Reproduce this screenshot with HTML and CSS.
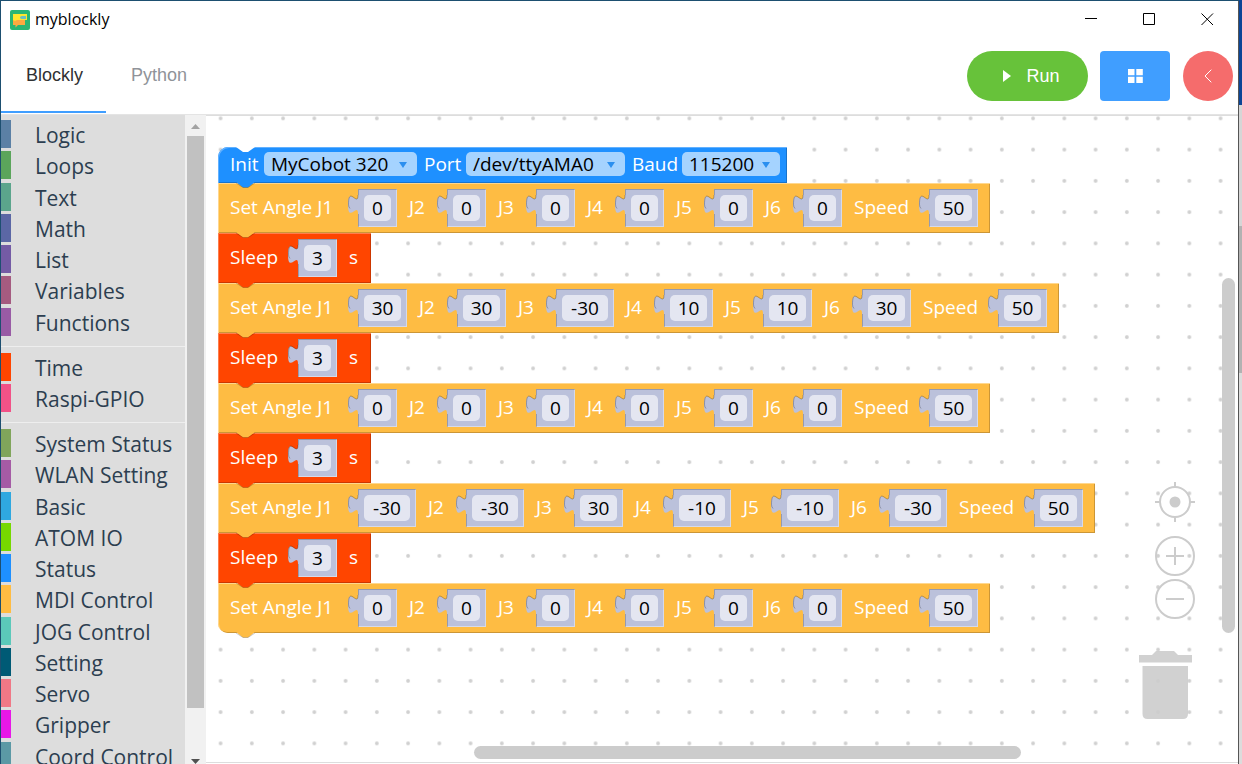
FILE: index.html
```html
<!DOCTYPE html>
<html lang="en">
<head>
<meta charset="utf-8">
<title>myblockly</title>
<link rel="stylesheet" href="styles.css">
</head>
<body>
<svg class="defs" aria-hidden="true">
  <symbol id="tab" viewBox="0 0 11 26"><path class="tab-fill" d="M11 6H10C10 18.500 0 -4 0 15.500S10 12.500 10 25H11Z"/><path class="tab-edge" d="M10 6C10 18.500 .5 -4 .5 15.500Q.5 18 2 19.500"/></symbol>
  <symbol id="bump" viewBox="0 0 20 7"><path d="M0 0 7 5.500H12L19 0Z"/><path class="bump-edge" d="M0 1 7 5.500H12L19 1"/></symbol>
</svg>
<div class="window">
  <header class="titlebar">
    <svg class="logo" viewBox="0 0 20 20" aria-hidden="true"><rect width="20" height="20" rx="2" fill="#2bb673"/><path d="M4 9H15V15H8L5.500 17.500V15H3V10Z" fill="#ffa940"/><path d="M3 4H17V10H7L5 11 3 10Z" fill="#ffe62e"/><path d="M10 7 11.500 6H16V9H11.500L10 8Z" fill="#6cc0c0"/></svg>
    <span class="app-name">myblockly</span>
    <div class="window-buttons">
      <button type="button" aria-label="Minimize"><svg viewBox="0 0 13 13"><path d="M0 5.500H12"/></svg></button>
      <button type="button" aria-label="Maximize"><svg viewBox="0 0 13 13"><path d="M.5 .5H11.500V11.500H.5Z"/></svg></button>
      <button type="button" aria-label="Close"><svg viewBox="0 0 13 13"><path d="M.5 .5 12 12M12 .5 .5 12"/></svg></button>
    </div>
  </header>
  <div class="toolbar">
    <nav class="tabs">
      <a class="tab active" href="#blockly">Blockly</a>
      <a class="tab" href="#python">Python</a>
    </nav>
    <div class="actions">
      <button type="button" class="run"><svg viewBox="0 0 8 12" aria-hidden="true"><path d="M0 0 8 6 0 12Z"/></svg>Run</button>
      <button type="button" class="grid-button" aria-label="Panels"><svg viewBox="0 0 15 14"><path d="M0 0H6.500V6.200H0ZM8.300 0H14.800V6.200H8.300ZM0 7.800H6.500V14H0ZM8.300 7.800H14.800V14H8.300Z"/></svg></button>
      <button type="button" class="collapse" aria-label="Collapse"><svg viewBox="0 0 8 14"><path d="M7.300 .7 1 7 7.300 13.300"/></svg></button>
    </div>
  </div>
  <main class="main">
    <aside class="toolbox">
      <nav class="categories">
        <div class="group logic-group">
          <a class="cat c-logic" href="#logic">Logic</a>
          <a class="cat c-loops" href="#loops">Loops</a>
          <a class="cat c-text" href="#text">Text</a>
          <a class="cat c-math" href="#math">Math</a>
          <a class="cat c-list" href="#list">List</a>
          <a class="cat c-vars" href="#variables">Variables</a>
          <a class="cat c-func" href="#functions">Functions</a>
        </div>
        <div class="group time-group">
          <a class="cat c-time" href="#time">Time</a>
          <a class="cat c-gpio" href="#gpio">Raspi-GPIO</a>
        </div>
        <div class="group robot-group">
          <a class="cat c-system" href="#system">System Status</a>
          <a class="cat c-wlan" href="#wlan">WLAN Setting</a>
          <a class="cat c-basic" href="#basic">Basic</a>
          <a class="cat c-atom" href="#atom">ATOM IO</a>
          <a class="cat c-status" href="#status">Status</a>
          <a class="cat c-mdi" href="#mdi">MDI Control</a>
          <a class="cat c-jog" href="#jog">JOG Control</a>
          <a class="cat c-setting" href="#setting">Setting</a>
          <a class="cat c-servo" href="#servo">Servo</a>
          <a class="cat c-gripper" href="#gripper">Gripper</a>
          <a class="cat c-coord" href="#coord">Coord Control</a>
        </div>
      </nav>
      <div class="scroll-track" aria-hidden="true">
        <svg viewBox="0 0 9 5"><path d="M0 5 4.500 0 9 5Z" fill="#a3a3a3"/></svg>
        <div class="scroll-thumb"></div>
        <svg viewBox="0 0 9 5"><path d="M0 0H9L4.500 5Z" fill="#505050"/></svg>
      </div>
    </aside>
    <section class="workspace" aria-label="Workspace">
      <svg class="dots" aria-hidden="true">
        <pattern id="grid" width="31.250" height="31.250" patternUnits="userSpaceOnUse" x="-1" y="-13.250"><circle cx="15.600" cy="15.600" r="1.900" fill="#d0d0d0"/></pattern>
        <rect width="100%" height="100%" fill="url(#grid)"/>
      </svg>
      <div class="stack">
        <div class="block init">
          <svg class="notch" viewBox="0 0 20 7" aria-hidden="true"><path d="M0 0 7 5H12L19 0Z"/></svg>
          <label class="init-label" for="model">Init</label>
          <span class="picker model"><select id="model"><option>MyCobot 320</option></select><i class="caret"></i></span>
          <label class="port-label" for="port">Port</label>
          <span class="picker port"><select id="port"><option>/dev/ttyAMA0</option></select><i class="caret"></i></span>
          <label class="baud-label" for="baud">Baud</label>
          <span class="picker baud"><select id="baud"><option>115200</option></select><i class="caret"></i></span>
          <svg class="bump"><use href="#bump"/></svg>
        </div>
        <div class="block angle">
          <label class="arg"><span class="name">Set Angle J1</span><span class="socket one"><svg><use href="#tab"/></svg><input value="0"></span></label>
          <label class="arg"><span class="joint">J2</span><span class="socket one"><svg><use href="#tab"/></svg><input value="0"></span></label>
          <label class="arg"><span class="joint">J3</span><span class="socket one"><svg><use href="#tab"/></svg><input value="0"></span></label>
          <label class="arg"><span class="joint">J4</span><span class="socket one"><svg><use href="#tab"/></svg><input value="0"></span></label>
          <label class="arg"><span class="joint">J5</span><span class="socket one"><svg><use href="#tab"/></svg><input value="0"></span></label>
          <label class="arg"><span class="joint">J6</span><span class="socket one"><svg><use href="#tab"/></svg><input value="0"></span></label>
          <label class="arg"><span class="speed">Speed</span><span class="socket two"><svg><use href="#tab"/></svg><input value="50"></span></label>
          <svg class="bump"><use href="#bump"/></svg>
        </div>
        <div class="block sleep">
          <label class="arg"><span class="sleep-name">Sleep</span><span class="socket one"><svg><use href="#tab"/></svg><input value="3"></span><span class="unit">s</span></label>
          <svg class="bump"><use href="#bump"/></svg>
        </div>
        <div class="block angle">
          <label class="arg"><span class="name">Set Angle J1</span><span class="socket two"><svg><use href="#tab"/></svg><input value="30"></span></label>
          <label class="arg"><span class="joint">J2</span><span class="socket two"><svg><use href="#tab"/></svg><input value="30"></span></label>
          <label class="arg"><span class="joint">J3</span><span class="socket three"><svg><use href="#tab"/></svg><input value="-30"></span></label>
          <label class="arg"><span class="joint">J4</span><span class="socket two"><svg><use href="#tab"/></svg><input value="10"></span></label>
          <label class="arg"><span class="joint">J5</span><span class="socket two"><svg><use href="#tab"/></svg><input value="10"></span></label>
          <label class="arg"><span class="joint">J6</span><span class="socket two"><svg><use href="#tab"/></svg><input value="30"></span></label>
          <label class="arg"><span class="speed">Speed</span><span class="socket two"><svg><use href="#tab"/></svg><input value="50"></span></label>
          <svg class="bump"><use href="#bump"/></svg>
        </div>
        <div class="block sleep">
          <label class="arg"><span class="sleep-name">Sleep</span><span class="socket one"><svg><use href="#tab"/></svg><input value="3"></span><span class="unit">s</span></label>
          <svg class="bump"><use href="#bump"/></svg>
        </div>
        <div class="block angle">
          <label class="arg"><span class="name">Set Angle J1</span><span class="socket one"><svg><use href="#tab"/></svg><input value="0"></span></label>
          <label class="arg"><span class="joint">J2</span><span class="socket one"><svg><use href="#tab"/></svg><input value="0"></span></label>
          <label class="arg"><span class="joint">J3</span><span class="socket one"><svg><use href="#tab"/></svg><input value="0"></span></label>
          <label class="arg"><span class="joint">J4</span><span class="socket one"><svg><use href="#tab"/></svg><input value="0"></span></label>
          <label class="arg"><span class="joint">J5</span><span class="socket one"><svg><use href="#tab"/></svg><input value="0"></span></label>
          <label class="arg"><span class="joint">J6</span><span class="socket one"><svg><use href="#tab"/></svg><input value="0"></span></label>
          <label class="arg"><span class="speed">Speed</span><span class="socket two"><svg><use href="#tab"/></svg><input value="50"></span></label>
          <svg class="bump"><use href="#bump"/></svg>
        </div>
        <div class="block sleep">
          <label class="arg"><span class="sleep-name">Sleep</span><span class="socket one"><svg><use href="#tab"/></svg><input value="3"></span><span class="unit">s</span></label>
          <svg class="bump"><use href="#bump"/></svg>
        </div>
        <div class="block angle">
          <label class="arg"><span class="name">Set Angle J1</span><span class="socket three"><svg><use href="#tab"/></svg><input value="-30"></span></label>
          <label class="arg"><span class="joint">J2</span><span class="socket three"><svg><use href="#tab"/></svg><input value="-30"></span></label>
          <label class="arg"><span class="joint">J3</span><span class="socket two"><svg><use href="#tab"/></svg><input value="30"></span></label>
          <label class="arg"><span class="joint">J4</span><span class="socket three"><svg><use href="#tab"/></svg><input value="-10"></span></label>
          <label class="arg"><span class="joint">J5</span><span class="socket three"><svg><use href="#tab"/></svg><input value="-10"></span></label>
          <label class="arg"><span class="joint">J6</span><span class="socket three"><svg><use href="#tab"/></svg><input value="-30"></span></label>
          <label class="arg"><span class="speed">Speed</span><span class="socket two"><svg><use href="#tab"/></svg><input value="50"></span></label>
          <svg class="bump"><use href="#bump"/></svg>
        </div>
        <div class="block sleep">
          <label class="arg"><span class="sleep-name">Sleep</span><span class="socket one"><svg><use href="#tab"/></svg><input value="3"></span><span class="unit">s</span></label>
          <svg class="bump"><use href="#bump"/></svg>
        </div>
        <div class="block angle last">
          <label class="arg"><span class="name">Set Angle J1</span><span class="socket one"><svg><use href="#tab"/></svg><input value="0"></span></label>
          <label class="arg"><span class="joint">J2</span><span class="socket one"><svg><use href="#tab"/></svg><input value="0"></span></label>
          <label class="arg"><span class="joint">J3</span><span class="socket one"><svg><use href="#tab"/></svg><input value="0"></span></label>
          <label class="arg"><span class="joint">J4</span><span class="socket one"><svg><use href="#tab"/></svg><input value="0"></span></label>
          <label class="arg"><span class="joint">J5</span><span class="socket one"><svg><use href="#tab"/></svg><input value="0"></span></label>
          <label class="arg"><span class="joint">J6</span><span class="socket one"><svg><use href="#tab"/></svg><input value="0"></span></label>
          <label class="arg"><span class="speed">Speed</span><span class="socket two"><svg><use href="#tab"/></svg><input value="50"></span></label>
          <svg class="bump"><use href="#bump"/></svg>
        </div>
      </div>
      <div class="controls">
        <button type="button" aria-label="Center"><svg viewBox="0 0 40 40"><circle cx="20" cy="20" r="15"/><circle class="solid" cx="20" cy="20" r="5.500"/><path d="M20 0V5M20 35V40M0 20H5M35 20H40"/></svg></button>
        <button type="button" class="zoom-in" aria-label="Zoom in"><svg viewBox="0 0 40 40"><circle cx="20" cy="20" r="19"/><path d="M11 20H29M20 11V29"/></svg></button>
        <button type="button" aria-label="Zoom out"><svg viewBox="0 0 40 40"><circle cx="20" cy="20" r="19"/><path d="M11 20H29"/></svg></button>
      </div>
      <svg class="trash" viewBox="0 0 53 68" aria-label="Trash" role="img"><path d="M0 4H13L17 0H35L39 4H53V11.500H0ZM3.500 15H49V63Q49 68 44 68H8.500Q3.500 68 3.500 63Z"/></svg>
      <div class="bar-vertical"></div>
      <div class="bar-horizontal"></div>
    </section>
  </main>
</div>
</body>
</html>
```
FILE: styles.css
```css
* { box-sizing: border-box; }
body {
  margin: 0;
  height: 100vh;
  display: flex;
  overflow: hidden;
  padding: 1px 3px 0 1px;
  background: linear-gradient(#0c4596 0 105px, #d6d6d6 105px 226px, #b2b2b2 226px 373px, #dcdcdc 373px) right / 3px 100% no-repeat #1d4f70;
  font-family: "Open Sans", "Noto Sans", sans-serif;
}
button { border: 0; padding: 0; background: none; display: grid; place-items: center; }
a { text-decoration: none; color: inherit; }
svg { display: block; }
.defs { position: absolute; width: 0; height: 0; }
.window { flex: 1; min-width: 0; display: flex; flex-direction: column; background: #fff; border-right: 1px solid #555; }

.titlebar { flex: none; display: flex; align-items: center; height: 37px; padding: 0 2px 0 9px; }
.logo { width: 20px; height: 20px; margin-right: 5px; }
.app-name { font-size: 16px; color: #000; padding-bottom: 2px; }
.window-buttons { display: flex; margin-left: auto; }
.window-buttons button { width: 58px; height: 37px; }
.window-buttons svg { width: 13px; height: 13px; fill: none; stroke: #000; stroke-width: 1; }

.toolbar { flex: none; display: flex; justify-content: space-between; height: 77px; border-bottom: 1px solid #e4e4e4; font-family: "Liberation Sans", Arial, sans-serif; font-size: 18px; }
.tabs { display: flex; height: 75px; }
.tab { display: flex; align-items: center; padding: 0 25px; color: #909399; }
.tab.active { color: #303133; padding: 2px 23px 0 25px; border-bottom: 2px solid #409eff; }
.actions { display: flex; align-items: center; padding-right: 5px; }
.run { display: flex; align-items: center; justify-content: center; gap: 15px; width: 121px; height: 50px; padding-left: 8px; border-radius: 25px; background: #67c23a; color: #fff; font: inherit; margin-right: 12px; }
.actions svg { fill: #fff; }
.run svg { width: 8px; height: 12px; }
.grid-button { width: 70px; height: 50px; border-radius: 4px; background: #409eff; margin-right: 13px; }
.grid-button svg { width: 15px; height: 14px; }
.collapse { width: 50px; height: 50px; border-radius: 50%; background: #f56c6c; }
.collapse svg { width: 8px; height: 14px; fill: none; stroke: #fff; }

.main { flex: 1; min-height: 0; display: flex; }
.toolbox { flex: none; display: flex; width: 205px; overflow: hidden; background: #ddd; }
.categories { flex: 1; padding-top: 5px; font-size: 21px; color: #2c3e50; }
.group { display: grid; grid-auto-rows: 1fr; }
.logic-group { height: 219px; }
.time-group { height: 76px; margin-top: 7px; padding: 6px 0 7px; border-top: 1px solid #eee; }
.robot-group { height: 351px; padding-top: 6px; border-top: 1px solid #eee; }
.cat { display: flex; align-items: center; height: 28px; padding: 2px 0 0 24px; border-left: 10px solid; white-space: nowrap; }
.c-logic { border-color: #5b80a5; }
.c-loops { border-color: #5ba55b; }
.c-text { border-color: #5ba58c; }
.c-math { border-color: #5b67a5; }
.c-list { border-color: #745ba5; }
.c-vars { border-color: #a55b80; }
.c-func { border-color: #995ba5; }
.c-time { border-color: #ff4500; }
.c-gpio { border-color: #f25287; }
.c-system { border-color: #80a55b; }
.c-wlan { border-color: #a55ba5; }
.c-basic { border-color: #2fa8e0; }
.c-atom { border-color: #76d900; }
.c-status { border-color: #1e90ff; }
.c-mdi { border-color: #ffbc42; }
.c-jog { border-color: #5bc9ba; }
.c-setting { border-color: #005a75; }
.c-servo { border-color: #f07886; }
.c-gripper { border-color: #e817e8; }
.c-coord { border-color: #5b99a5; }
.scroll-track { flex: none; display: flex; flex-direction: column; align-items: center; width: 21px; background: #f1f1f1; padding-top: 9px; }
.scroll-track svg { flex: none; width: 9px; height: 5px; }
.scroll-thumb { flex: 1; width: 17px; margin: 7px 0 51px; background: #c1c1c1; }

.workspace { position: relative; flex: 1; min-width: 0; overflow: hidden; margin-bottom: 1px; padding: 31px 0 0 12px; border: solid #ddd; border-width: 1px 0; }
.dots { position: absolute; inset: 0; width: 100%; height: 100%; }
.stack { position: relative; display: flex; flex-direction: column; align-items: flex-start; font-size: 19px; color: #fff; }
.block { position: relative; display: flex; align-items: center; height: 50px; white-space: nowrap; }
.init { height: 36px; padding: 0 7px 2px 0; border-radius: 10px 0 0; background: #1e90ff; color: #1e90ff; box-shadow: inset 1px 1px #62b1ff, inset -1px -1px #1873cc; }
.angle { padding-right: 12px; background: #febc43; color: #febc43; box-shadow: inset 1px 1px #ffd78e, inset -1px -1px #cc9636; }
.sleep { background: #ff4500; color: #ff4500; box-shadow: inset 1px 1px #ff7d4d, inset -1px -1px #cc3700; }
.last { border-radius: 0 0 0 10px; }
.block label { color: #fff; }
.notch { position: absolute; top: 0; left: 18px; width: 20px; height: 7px; fill: #fff; }
.bump { position: absolute; z-index: 1; bottom: -6px; left: 18px; width: 20px; height: 7px; fill: currentColor; }
.bump-edge { fill: none; stroke: #000; stroke-opacity: .2; }
.init-label { width: 46px; padding-left: 12px; }
.port-label { width: 49px; padding-left: 7px; }
.baud-label { width: 57px; padding-left: 7px; }
.picker { position: relative; display: flex; height: 24px; }
.model { width: 153px; }
.port { width: 159px; }
.baud { width: 98px; }
.picker select { appearance: none; width: 100%; height: 24px; padding: 0 7px; border: 0; border-radius: 5px; background: #a5d3ff; color: #000; font: inherit; line-height: 24px; }
.caret { position: absolute; top: 10px; right: 10px; border: solid transparent; border-width: 6px 4px 0; border-top-color: #2b8fef; }
.arg { display: flex; align-items: center; }
.name, .joint, .speed, .sleep-name, .unit { padding: 0 0 2px 12px; }
.name { width: 140px; }
.joint { width: 50px; }
.speed { width: 87px; }
.sleep-name { width: 80px; }
.unit { width: 34px; }
.socket { position: relative; display: flex; padding: 6px; height: 38px; background: #bbc1db; box-shadow: inset 1px 1px #0003, inset -1px -1px #fff6; }
.socket svg { position: absolute; top: 0; left: -10px; width: 11px; height: 26px; }
.tab-fill { fill: #bbc1db; }
.tab-edge { fill: none; stroke: #000; stroke-opacity: .25; }
.one { width: 39px; }
.two { width: 49px; }
.three { width: 58px; }
.socket input { width: 100%; height: 26px; padding: 0; border: 0; border-radius: 5px; background: #e4e6f1; color: #000; font: inherit; text-align: center; }

.controls { position: absolute; right: 43px; bottom: 143px; display: grid; gap: 3px; }
.zoom-in { margin-top: 11px; }
.controls svg { width: 40px; height: 40px; fill: none; stroke: #ccc; stroke-width: 2; }
.controls .solid { fill: #ccc; stroke: none; }
.trash { position: absolute; right: 46px; bottom: 43px; width: 53px; height: 68px; fill: #ccc; fill-opacity: .9; }
.bar-vertical { position: absolute; right: 3px; top: 25%; width: 13px; height: 55%; border-radius: 7px; background: #ccc; }
.bar-horizontal { position: absolute; left: 26%; bottom: 3px; width: 53%; height: 13px; border-radius: 7px; background: #ccc; }
```
